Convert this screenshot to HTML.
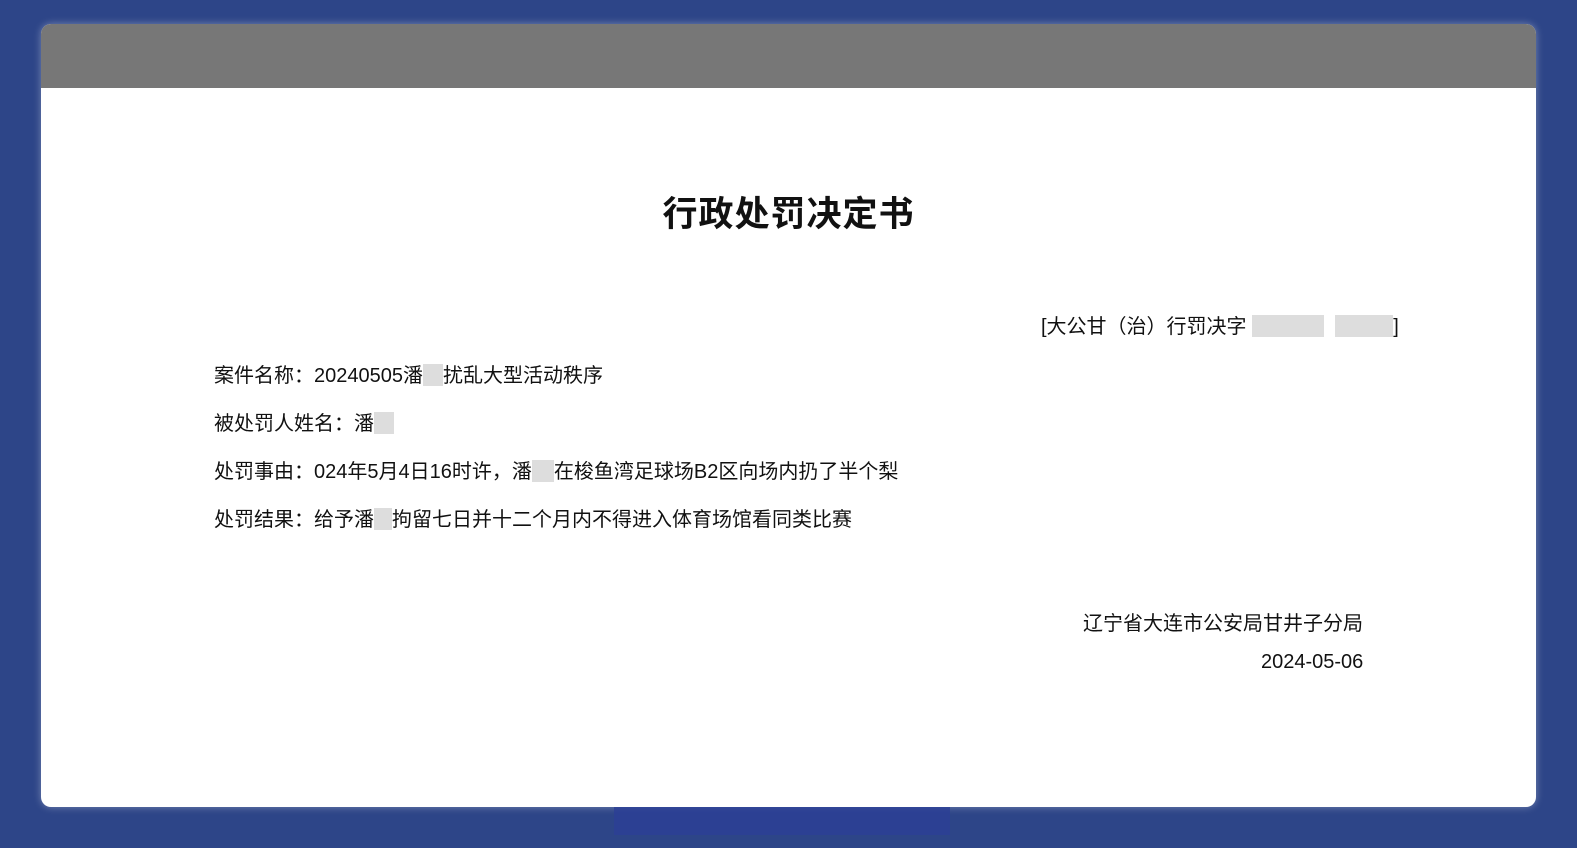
<!DOCTYPE html>
<html><head><meta charset="utf-8"><style>
html,body{margin:0;padding:0;}
body{width:1577px;height:848px;background:#2d4588;position:relative;overflow:hidden;font-family:"Liberation Sans","Noto Sans CJK SC",sans-serif;color:#111;}
.card{position:absolute;left:41px;top:24px;width:1495px;height:783px;background:#fff;border-radius:10px;overflow:hidden;box-shadow:0 0 8px rgba(255,255,255,0.35);}
.hdr{height:64px;background:#777;}
.t{position:absolute;white-space:nowrap;font-size:20px;}
.title{position:absolute;left:0;width:100%;top:162px;text-align:center;font-size:35px;font-weight:bold;letter-spacing:1px;}
.b{display:inline-block;background:#ddd;height:22px;vertical-align:-4px;}
.strip{position:absolute;left:614px;top:807px;width:336px;height:28px;background:#2c3f96;opacity:.8;}
</style></head><body>
<div class="card">
<div class="hdr"></div>
<div class="title">行政处罚决定书</div>
<div class="t" style="left:1000px;top:286px;">[大公甘（治）行罚决字 <span class="b" style="width:72px"></span>&nbsp;&nbsp;<span class="b" style="width:58px"></span>]</div>
<div class="t" style="left:173px;top:335px;">案件名称：20240505潘<span class="b" style="width:20px"></span>扰乱大型活动秩序</div>
<div class="t" style="left:173px;top:383px;">被处罚人姓名：潘<span class="b" style="width:20px"></span></div>
<div class="t" style="left:173px;top:431px;">处罚事由：024年5月4日16时许，潘<span class="b" style="width:22px"></span>在梭鱼湾足球场B2区向场内扔了半个梨</div>
<div class="t" style="left:173px;top:479px;">处罚结果：给予潘<span class="b" style="width:18px"></span>拘留七日并十二个月内不得进入体育场馆看同类比赛</div>
<div class="t" style="left:1042px;top:583px;">辽宁省大连市公安局甘井子分局</div>
<div class="t" style="left:1220px;top:627px;">2024-05-06</div>
</div>
<div class="strip"></div>
</body></html>
